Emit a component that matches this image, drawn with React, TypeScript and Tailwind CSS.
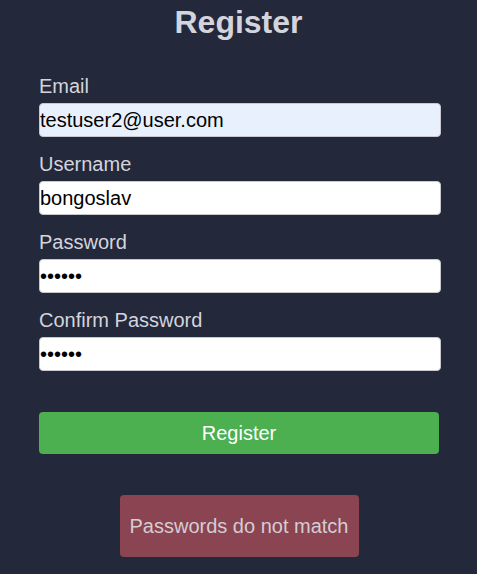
import { useState } from "react";

const labelCls = "block text-[20px] leading-[23px] text-[#d4d4dc]";
const inputCls =
  "block w-[402px] h-[34px] mt-[5px] rounded-[4px] border border-[#c8c8cc] text-[20px] text-black outline-none";

export default function App() {
  const [email, setEmail] = useState("testuser2@user.com");
  const [username, setUsername] = useState("bongoslav");
  const [password, setPassword] = useState("123456");
  const [confirm, setConfirm] = useState("654321");

  return (
    <div className="min-h-[574px] w-[477px] bg-[#23283b] font-['Liberation_Sans',Arial,sans-serif]">
      <h1 className="pt-[4px] text-center text-[32px] font-bold leading-[37px] text-[#d4d4dc]">
        Register
      </h1>

      <form className="mt-[34px] px-[39px]" onSubmit={(e) => e.preventDefault()}>
        <label className={labelCls}>Email</label>
        <input
          className={inputCls + " bg-[#e8f0fe]"}
          value={email}
          onChange={(e) => setEmail(e.target.value)}
        />

        <label className={labelCls + " mt-4"}>Username</label>
        <input
          className={inputCls + " bg-white"}
          value={username}
          onChange={(e) => setUsername(e.target.value)}
        />

        <label className={labelCls + " mt-4"}>Password</label>
        <input
          type="password"
          className={inputCls + " bg-white"}
          value={password}
          onChange={(e) => setPassword(e.target.value)}
        />

        <label className={labelCls + " mt-4"}>Confirm Password</label>
        <input
          type="password"
          className={inputCls + " bg-white"}
          value={confirm}
          onChange={(e) => setConfirm(e.target.value)}
        />

        <button
          type="submit"
          className="mt-[41px] block h-[42px] w-[400px] rounded-[4px] bg-[#4caf50] text-[20px] text-white"
        >
          Register
        </button>
      </form>

      <div className="mt-[41px] flex justify-center pl-[1px]">
        <div className="flex h-[62px] w-[239px] items-center justify-center rounded-[4px] bg-[#8b4452] text-[20px] text-[#d4cdd2]">
          Passwords do not match
        </div>
      </div>
    </div>
  );
}
